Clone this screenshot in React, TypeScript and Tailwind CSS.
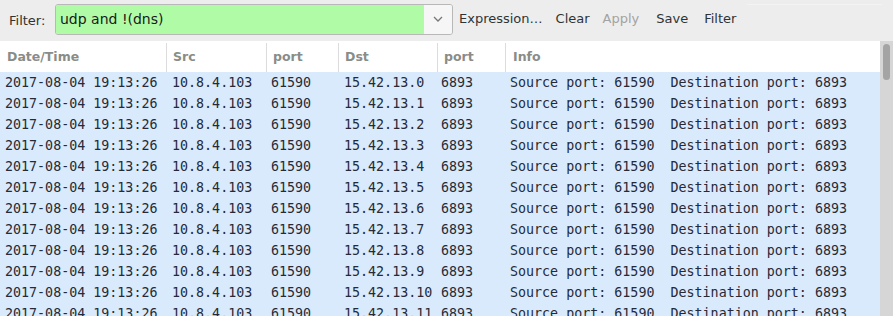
import React from "react";

const rows = Array.from({ length: 12 }, (_, i) => i);

export default function App() {
  return (
    <div className="w-[893px] h-[316px] overflow-hidden bg-[#ededed] flex flex-col" style={{ fontFamily: '"DejaVu Sans", sans-serif' }}>
      {/* toolbar */}
      <div className="h-[41px] flex items-center text-[13px] text-[#2e3436] shrink-0">
        <span className="ml-[9px] w-[46px]">Filter:</span>
        <div className="h-[31px] w-[398px] flex rounded-[3px] border border-[#b8b8b8] overflow-hidden mt-[-3px]">
          <div className="flex-1 bg-[#b0fca6] flex items-center pl-[4px] text-[14px] text-[#1a1a1a]">udp and !(dns)</div>
          <div className="w-[28px] bg-[#f6f6f6] flex items-center justify-center">
            <svg width="10" height="6" viewBox="0 0 10 6"><path d="M1 1 L5 5 L9 1" fill="none" stroke="#777" strokeWidth="1.3" /></svg>
          </div>
        </div>
        <div className="flex items-center mt-[-3px]">
          <span className="ml-[6px]">Expression…</span>
          <span className="ml-[13px]">Clear</span>
          <span className="ml-[13px] text-[#a3a3a3]">Apply</span>
          <span className="ml-[17px]">Save</span>
          <span className="ml-[16px]">Filter</span>
        </div>
        <div className="ml-[11px] h-[30px] w-[135px] border-t border-[#f3f3f3] mt-[-3px]" />
      </div>
      {/* table */}
      <div className="flex flex-1 min-h-0">
        <div className="flex-1 bg-[#d9eafd] flex flex-col min-w-0">
          <div className="h-[31px] bg-white flex text-[12.5px] font-bold text-[#8a8c88] shrink-0 pt-[2px]">
            <div className="w-[166px] pl-[7px] flex items-center">Date/Time</div>
            <div className="w-[100px] border-l border-[#dcdcdc] pl-[6px] flex items-center">Src</div>
            <div className="w-[72px] border-l border-[#dcdcdc] pl-[6px] flex items-center">port</div>
            <div className="w-[99px] border-l border-[#dcdcdc] pl-[6px] flex items-center">Dst</div>
            <div className="w-[68px] border-l border-[#dcdcdc] pl-[6px] flex items-center">port</div>
            <div className="flex-1 border-l border-[#dcdcdc] pl-[7px] flex items-center">Info</div>
          </div>
          <div className="flex flex-col text-[13.33px] text-[#262a36] whitespace-pre" style={{ fontFamily: '"DejaVu Sans Mono", monospace' }}>
            {rows.map((i) => (
              <div key={i} className="h-[21px] flex items-center">
                <div className="w-[166px] pl-[5px]">2017-08-04 19:13:26</div>
                <div className="w-[100px] pl-[6px]">10.8.4.103</div>
                <div className="w-[72px] pl-[5px]">61590</div>
                <div className="w-[99px] pl-[6px]">{`15.42.13.${i}`}</div>
                <div className="w-[68px] pl-[4px]">6893</div>
                <div className="flex-1 pl-[5px]">Source port: 61590  Destination port: 6893</div>
              </div>
            ))}
          </div>
        </div>
        <div className="w-[13px] bg-[#d6d6d6] relative">
          <div className="absolute left-[3px] top-[3px] w-[7px] h-[36px] rounded-full bg-[#a4a4a4]" />
        </div>
      </div>
    </div>
  );
}
